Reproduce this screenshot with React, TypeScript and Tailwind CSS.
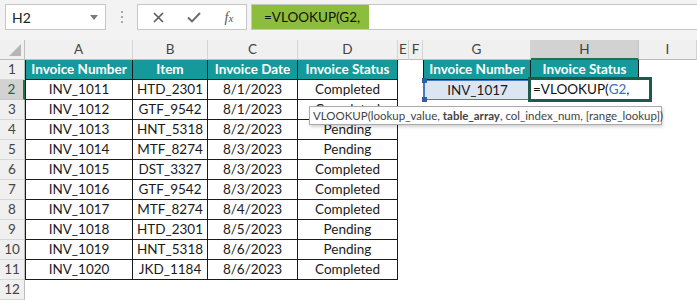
import React from "react";

const COLS = "grid grid-cols-[25px_108px_75px_90px_100px_11px_14px_108px_108px_58px]";

const data: string[][] = [
  ["INV_1011", "HTD_2301", "8/1/2023", "Completed"],
  ["INV_1012", "GTF_9542", "8/1/2023", "Completed"],
  ["INV_1013", "HNT_5318", "8/2/2023", "Pending"],
  ["INV_1014", "MTF_8274", "8/3/2023", "Pending"],
  ["INV_1015", "DST_3327", "8/3/2023", "Completed"],
  ["INV_1016", "GTF_9542", "8/3/2023", "Completed"],
  ["INV_1017", "MTF_8274", "8/4/2023", "Completed"],
  ["INV_1018", "HTD_2301", "8/5/2023", "Pending"],
  ["INV_1019", "HNT_5318", "8/6/2023", "Pending"],
  ["INV_1020", "JKD_1184", "8/6/2023", "Completed"],
];

const letters = ["A", "B", "C", "D", "E", "F", "G", "H", "I"];

function ColHeader({ l }: { l: string }) {
  const sel = l === "H";
  return (
    <div
      className={
        sel
          ? "h-[20px] bg-[#d2d2d2] border-r border-r-[#c4c4c4] border-b-2 border-b-[#217346] flex items-center justify-center text-[13.5px] text-[#3d3d3d]"
          : "h-[20px] bg-[#f0f0f0] border-r border-r-[#d4d4d4] border-b border-b-[#bdbdbd] flex items-center justify-center text-[13.5px] text-[#444]"
      }
    >
      {l}
    </div>
  );
}

function RowHeader({ n }: { n: number }) {
  const sel = n === 2;
  return (
    <div
      className={
        sel
          ? "h-[20px] bg-[#d2d2d2] border-b border-b-[#c8c8c8] border-r-2 border-r-[#217346] flex items-center justify-center text-[13.5px] text-[#2f5d48]"
          : "h-[20px] bg-[#f0f0f0] border-b border-b-[#d8d8d8] border-r border-r-[#bdbdbd] flex items-center justify-center text-[13.5px] text-[#444]"
      }
    >
      {n}
    </div>
  );
}

function TealCell({ children, first }: { children: React.ReactNode; first?: boolean }) {
  return (
    <div
      className={
        "h-[20px] bg-[#16999a] text-white font-bold text-[13.5px] flex items-center justify-center whitespace-nowrap border-r border-r-[#1c1c1c] border-b border-b-[#1c1c1c] " +
        (first ? "border-l border-l-[#1c1c1c]" : "")
      }
    >
      {children}
    </div>
  );
}

function DataCell({ children, first }: { children: React.ReactNode; first?: boolean }) {
  return (
    <div
      className={
        "h-[20px] bg-white text-[13.5px] text-[#1a1a1a] flex items-center justify-center whitespace-nowrap border-r border-r-[#1c1c1c] border-b border-b-[#1c1c1c] " +
        (first ? "border-l border-l-[#1c1c1c]" : "")
      }
    >
      {children}
    </div>
  );
}

function Empty() {
  return <div className="h-[20px] bg-white" />;
}

export default function App() {
  return (
    <div
      className="relative w-[697px] h-[301px] overflow-hidden bg-white"
      style={{ fontFamily: "Lato, 'Liberation Sans', sans-serif" }}
    >
      {/* Formula bar */}
      <div className="h-[40px] bg-[#f3f3f3] pt-[4px]">
        <div className="flex items-stretch h-[26px]">
          <div className="ml-[5px] w-[101px] bg-white border border-[#c6c6c6] flex items-center justify-between pl-[6px] pr-[7px]">
            <span className="text-[14px] text-[#222]">H2</span>
            <svg width="8" height="5" viewBox="0 0 8 5">
              <path d="M0 0 L8 0 L4 5 Z" fill="#7a7a7a" />
            </svg>
          </div>
          <div className="w-[31px] flex flex-col items-center justify-center gap-[3px]">
            <div className="w-[2px] h-[2px] bg-[#a8a8a8]" />
            <div className="w-[2px] h-[2px] bg-[#a8a8a8]" />
            <div className="w-[2px] h-[2px] bg-[#a8a8a8]" />
          </div>
          <div className="w-[110px] bg-white border border-[#c6c6c6] flex items-center">
            <div className="w-[38px] flex justify-center pl-[2px]">
              <svg width="11" height="11" viewBox="0 0 11 11">
                <path d="M1 1 L10 10 M10 1 L1 10" stroke="#5b5b5b" strokeWidth="1.6" />
              </svg>
            </div>
            <div className="w-[36px] flex justify-center">
              <svg width="14" height="11" viewBox="0 0 14 11">
                <path d="M1 5.5 L5 9.5 L13 1" stroke="#6a6a6a" strokeWidth="1.9" fill="none" />
              </svg>
            </div>
            <div className="w-[34px] flex justify-center">
              <span
                className="italic text-[14px] text-[#555]"
                style={{ fontFamily: "'Liberation Serif', serif" }}
              >
                f<span className="text-[11px]">x</span>
              </span>
            </div>
          </div>
          <div className="ml-[4px] flex-1 bg-white border-y border-l border-[#c6c6c6] flex">
            <div className="w-[117px] bg-[#8dbd3d] flex items-center pl-[12px] text-[13.5px] text-[#111] whitespace-nowrap">
              =VLOOKUP(G2,
            </div>
          </div>
        </div>
      </div>

      {/* Sheet */}
      <div className={COLS}>
        {/* Column headers */}
        <div className="h-[20px] bg-[#f0f0f0] border-r border-r-[#bdbdbd] border-b border-b-[#bdbdbd] flex items-end justify-end pr-[3px] pb-[3px]">
          <svg width="12" height="12" viewBox="0 0 12 12">
            <path d="M12 0 L12 12 L0 12 Z" fill="#b6b6b6" />
          </svg>
        </div>
        {letters.map((l) => (
          <ColHeader key={l} l={l} />
        ))}

        {/* Row 1 */}
        <RowHeader n={1} />
        <TealCell first>Invoice Number</TealCell>
        <TealCell>Item</TealCell>
        <TealCell>Invoice Date</TealCell>
        <TealCell>Invoice Status</TealCell>
        <Empty />
        <Empty />
        <TealCell first>Invoice Number</TealCell>
        <TealCell>Invoice Status</TealCell>
        <Empty />

        {data.map((r, i) => (
          <React.Fragment key={i}>
            <RowHeader n={i + 2} />
            <DataCell first>{r[0]}</DataCell>
            <DataCell>{r[1]}</DataCell>
            <DataCell>{r[2]}</DataCell>
            <DataCell>{r[3]}</DataCell>
            <Empty />
            <Empty />
            {i === 0 ? (
              <>
                <div className="relative h-[20px] bg-[#dce6f2] border border-[#4a78c2] border-l-2 flex items-center justify-center text-[13.5px] text-[#1a1a1a]">
                  INV_1017
                  <div className="absolute left-[-3px] top-[-3px] w-[5px] h-[5px] bg-[#2f5ea8]" />
                  <div className="absolute left-[-3px] bottom-[-3px] w-[5px] h-[5px] bg-[#2f5ea8]" />
                  <div className="absolute right-[-3px] top-[-3px] w-[5px] h-[5px] bg-[#2f5ea8]" />
                  <div className="absolute right-[-3px] bottom-[-3px] w-[5px] h-[5px] bg-[#2f5ea8]" />
                </div>
                <Empty />
              </>
            ) : (
              <>
                <Empty />
                <Empty />
              </>
            )}
            <Empty />
          </React.Fragment>
        ))}

        {/* Row 12 */}
        <RowHeader n={12} />
        <Empty />
        <Empty />
        <Empty />
        <Empty />
        <Empty />
        <Empty />
        <Empty />
        <Empty />
        <Empty />
      </div>

      {/* Active cell edit box */}
      <div className="absolute left-[528px] top-[77px] w-[124px] h-[25px] bg-white border-[3px] border-[#1d5a4c] flex items-center pl-[2px] text-[13.5px] text-[#111] whitespace-nowrap">
        =VLOOKUP(<span className="text-[#3b6fb6]">G2</span>,
      </div>

      {/* Tooltip */}
      <div className="absolute left-[309px] top-[106px] w-[353px] h-[19px] bg-[#fdfdfd] border border-[#aaaaaa] shadow-[1px_2px_3px_rgba(0,0,0,0.18)] flex items-center pl-[3px] text-[11.5px] text-[#444] whitespace-pre">
        {"VLOOKUP(lookup_value, "}
        <span className="font-bold">table_array</span>
        {", col_index_num, [range_lookup])"}
      </div>
    </div>
  );
}
